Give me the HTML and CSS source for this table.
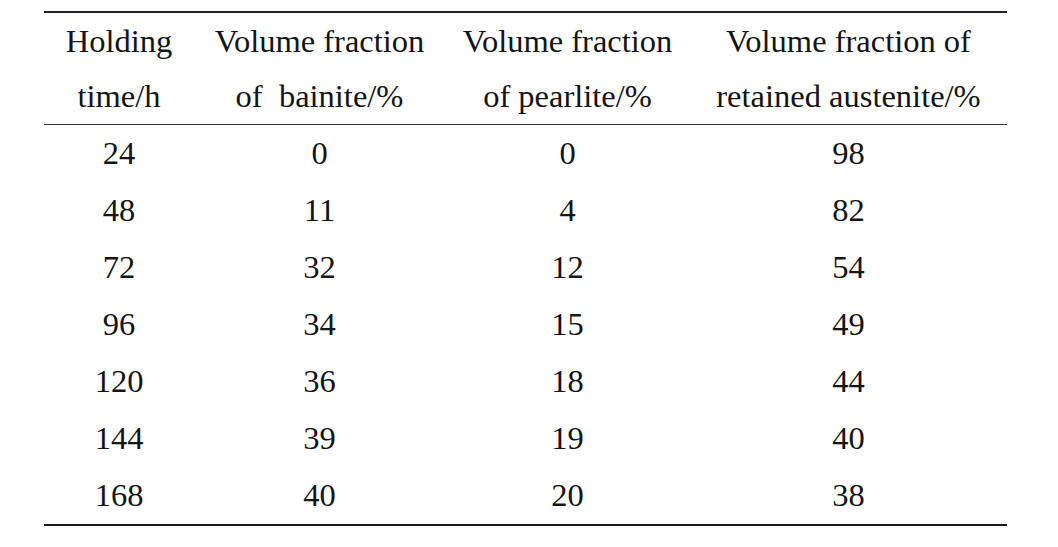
FILE: index.html
```html
<!DOCTYPE html>
<html lang="en">
<head>
<meta charset="utf-8">
<title>Volume fractions</title>
<link rel="stylesheet" href="styles.css">
</head>
<body>
<table class="data">
  <colgroup>
    <col class="c1"><col class="c2"><col class="c3"><col class="c4">
  </colgroup>
  <thead>
    <tr>
      <th>Holding<br>time/h</th>
      <th>Volume fraction<br>of&nbsp; bainite/%</th>
      <th>Volume fraction<br>of pearlite/%</th>
      <th>Volume fraction of<br>retained austenite/%</th>
    </tr>
  </thead>
  <tbody>
    <tr><td>24</td><td>0</td><td>0</td><td>98</td></tr>
    <tr><td>48</td><td>11</td><td>4</td><td>82</td></tr>
    <tr><td>72</td><td>32</td><td>12</td><td>54</td></tr>
    <tr><td>96</td><td>34</td><td>15</td><td>49</td></tr>
    <tr><td>120</td><td>36</td><td>18</td><td>44</td></tr>
    <tr><td>144</td><td>39</td><td>19</td><td>40</td></tr>
    <tr><td>168</td><td>40</td><td>20</td><td>38</td></tr>
  </tbody>
</table>
</body>
</html>
```

FILE: styles.css
```css
html, body {
  margin: 0;
  padding: 0;
  background: #ffffff;
}
body {
  padding-top: 11px;
  font-family: "Liberation Serif", Tinos, "Times New Roman", Times, "DejaVu Serif", serif;
  font-size: 32.5px;
  color: #141414;
}
.data {
  margin-left: 44px;
  width: 963px;
  table-layout: fixed;
  border-collapse: separate;
  border-spacing: 0;
  font-family: "Liberation Serif", Tinos, "Times New Roman", Times, "DejaVu Serif", serif;
}
.c1 { width: 150px; }
.c2 { width: 251px; }
.c3 { width: 245px; }
.c4 { width: 317px; }
.data th {
  font-family: inherit;
  font-weight: normal;
  text-align: center;
  line-height: 55px;
  padding: 1px 0 0 0;
  border-top: 2px solid #222;
  border-bottom: 1px solid #333;
  white-space: nowrap;
}
.data td {
  font-family: inherit;
  text-align: center;
  line-height: 57px;
  padding: 0;
}
.data tbody tr:last-child td {
  border-bottom: 2px solid #1a1a1a;
}
```
